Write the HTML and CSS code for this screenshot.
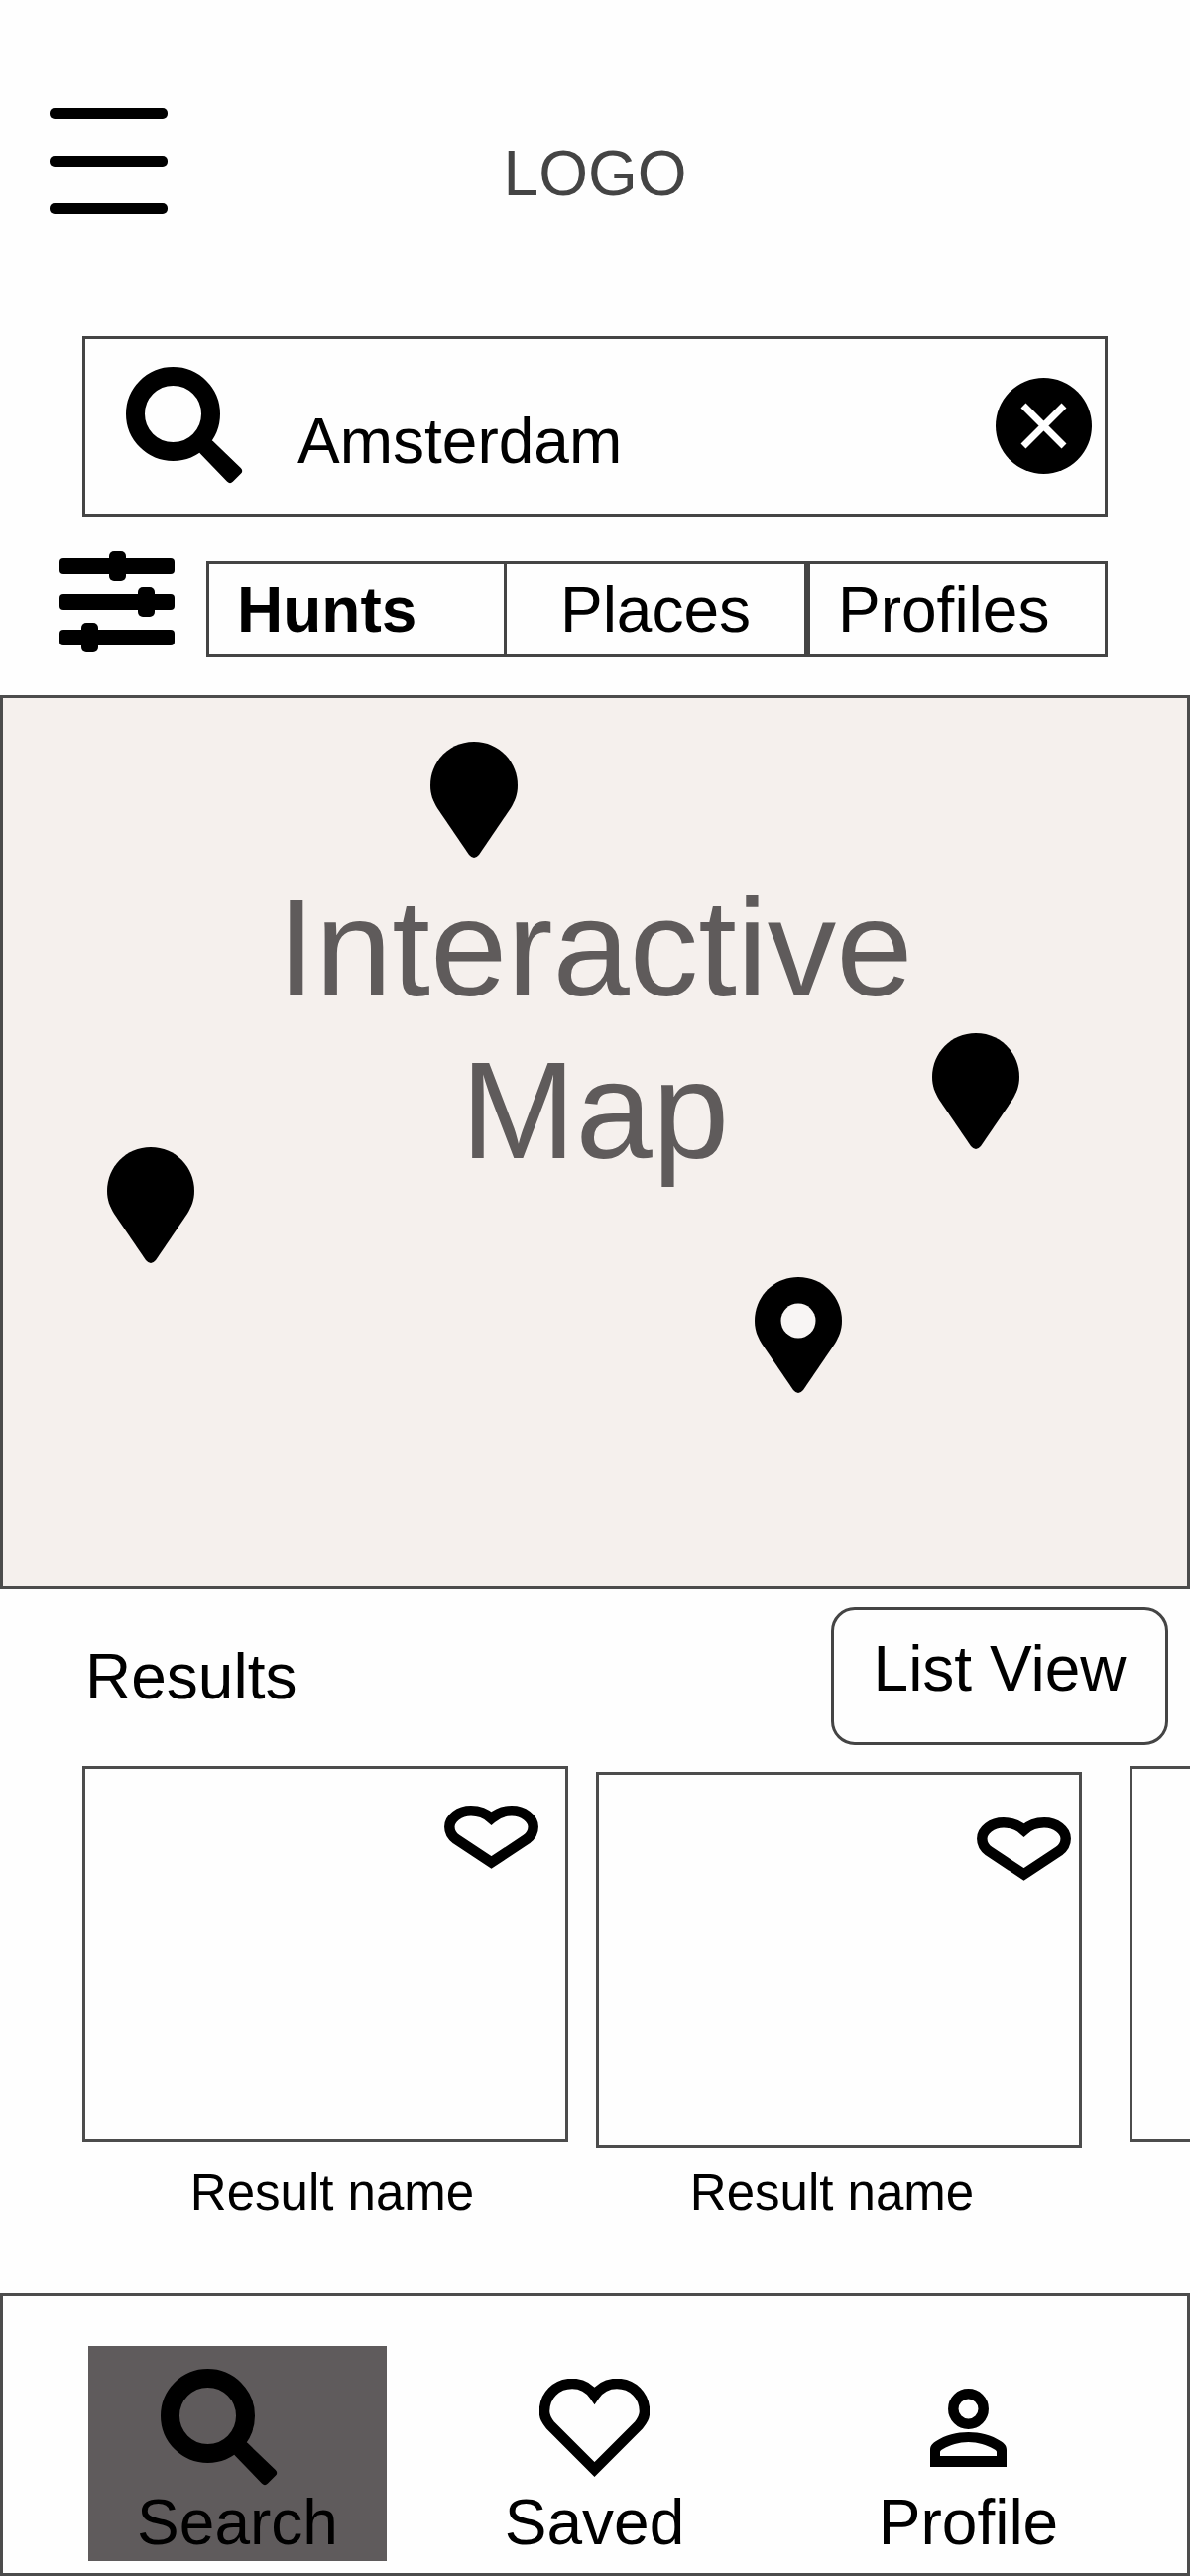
FILE: index.html
```html
<!DOCTYPE html>
<html lang="en">
<head>
<meta charset="utf-8">
<meta name="viewport" content="width=device-width, initial-scale=1">
<title>Search results</title>
<link rel="stylesheet" href="styles.css">
</head>
<body>
<svg class="sprite" aria-hidden="true">
  <symbol id="icon-search" viewBox="0 0 118 118">
    <circle cx="47.5" cy="47.5" r="38" fill="none" stroke="#000" stroke-width="19"/>
    <path d="M85 78L113 105L105 113L78 85Z" stroke="#000" stroke-width="8" stroke-linejoin="round"/>
  </symbol>
  <symbol id="icon-heart-wide" viewBox="0 0 95 64">
    <path d="M47.500 13C42 8 35 5.300 27 5.300C15 5.300 5.300 13 5.300 21.500C5.300 26 8 31 12 34L47.500 57.500L83 34C87 31 89.700 26 89.700 21.500C89.700 13 80 5.300 68 5.300C60 5.300 53 8 47.500 13Z" fill="none" stroke="#000" stroke-width="10.500"/>
  </symbol>
  <symbol id="icon-pin" viewBox="0 0 88 117">
    <path d="M44 0C19 0 0 20 0 44C0 54 3 60 7 67L39 114Q44 120 49 114L81 67C85 60 88 54 88 44C88 20 69 0 44 0Z"/>
  </symbol>
</svg>

<div class="page">
  <header class="header">
    <button class="menu" type="button" aria-label="Menu"><span></span><span></span><span></span></button>
    <div class="logo">LOGO</div>
  </header>

  <form class="search" role="search">
    <svg class="icon-search" aria-hidden="true"><use href="#icon-search"/></svg>
    <input class="search-input" type="text" value="Amsterdam" aria-label="Search">
    <button class="clear" type="button" aria-label="Clear search">
      <svg viewBox="0 0 97 97" width="97" height="97"><circle cx="48.5" cy="48.5" r="48.5"/><path d="M28 28L69 69M69 28L28 69" stroke="#fff" stroke-width="7"/></svg>
    </button>
  </form>

  <div class="filters">
    <button class="filter-button" type="button" aria-label="Filters">
      <svg viewBox="0 0 116 102" width="116" height="102">
        <rect y="7" width="116" height="16" rx="4"/><rect x="50" width="17" height="30" rx="5"/>
        <rect y="43" width="116" height="16" rx="4"/><rect x="79" y="36" width="17" height="30" rx="5"/>
        <rect y="79" width="116" height="16" rx="4"/><rect x="22" y="72" width="17" height="30" rx="5"/>
      </svg>
    </button>
    <div class="tabs">
      <button class="tab tab-active" type="button">Hunts</button>
      <button class="tab" type="button">Places</button>
      <button class="tab" type="button">Profiles</button>
    </div>
  </div>

  <section class="map" aria-label="Map">
    <h1 class="map-title">Interactive<br>Map</h1>
    <svg class="pin pin-north"><use href="#icon-pin"/></svg>
    <svg class="pin pin-east"><use href="#icon-pin"/></svg>
    <svg class="pin pin-west"><use href="#icon-pin"/></svg>
    <svg class="pin pin-south" viewBox="0 0 88 117"><use href="#icon-pin" width="88" height="117"/><circle cx="44" cy="44" r="17.5" fill="#f8f5f4"/></svg>
  </section>

  <section class="results">
    <div class="results-head">
      <h2 class="results-title">Results</h2>
      <button class="list-view" type="button">List View</button>
    </div>
    <div class="cards">
      <article class="card">
        <div class="card-picture"><button class="favorite" type="button" aria-label="Save result"><svg width="95" height="64"><use href="#icon-heart-wide"/></svg></button></div>
        <h3 class="card-name">Result name</h3>
      </article>
      <article class="card">
        <div class="card-picture"><button class="favorite" type="button" aria-label="Save result"><svg width="95" height="64"><use href="#icon-heart-wide"/></svg></button></div>
        <h3 class="card-name">Result name</h3>
      </article>
      <article class="card">
        <div class="card-picture"></div>
      </article>
    </div>
  </section>

  <nav class="nav">
    <a class="nav-item nav-current" href="#search">
      <span class="nav-icon"><svg class="icon-search"><use href="#icon-search"/></svg></span>
      Search
    </a>
    <a class="nav-item" href="#saved">
      <span class="nav-icon"><svg viewBox="0 0 111 99" width="111" height="99"><path d="M55.5 17C50 9 42 5 33 5C17 5 5 17 5 33C5 39 7 42 11 47L55.500 91.500L100 47C104 42 106 39 106 33C106 17 94 5 78 5C69 5 61 9 55.500 17Z" fill="none" stroke="#000" stroke-width="10.500"/></svg></span>
      Saved
    </a>
    <a class="nav-item" href="#profile">
      <span class="nav-icon"><svg viewBox="0 0 77 79" width="77" height="79"><circle cx="38.5" cy="20.500" r="15.200" fill="none" stroke="#000" stroke-width="10.500"/><path fill-rule="evenodd" d="M0 79V62C0 57 3 55 6 53C15 47 27 44 38.500 44C50 44 62 47 71 53C74 55 77 57 77 62V79ZM10 68H67V64C67 63 66 62 64 61C57 57 48 54 38.500 54C29 54 20 57 13 61C11 62 10 63 10 64Z"/></svg></span>
      Profile
    </a>
  </nav>
</div>
</body>
</html>
```
FILE: styles.css
```css
* {
  box-sizing: border-box;
}

body {
  margin: 0;
  background: #fefefe;
  color: #000;
  font-family: "Liberation Sans", Arial, sans-serif;
  font-size: 64px;
  line-height: 64px;
}

button {
  display: block;
  margin: 0;
  padding: 0;
  border: 0;
  background: none;
  color: inherit;
  font: inherit;
}

h1,
h2,
h3 {
  margin: 0;
  font-weight: 400;
}

svg {
  display: block;
  flex: none;
}

.sprite {
  position: absolute;
  width: 0;
  height: 0;
}

.icon-search {
  width: 118px;
  height: 118px;
}

.page {
  display: flex;
  flex-direction: column;
  min-height: 100vh;
  overflow: hidden;
}

/* Header */

.header {
  display: grid;
  grid-template-columns: 1fr auto 1fr;
  padding: 109px 50px 0;
}

.menu {
  display: flex;
  flex-direction: column;
  gap: 37px;
  width: 119px;
}

.menu span {
  height: 11px;
  border-radius: 5px;
  background: #000;
}

.logo {
  padding-top: 34px;
  color: #444;
}

/* Search box */

.search {
  display: flex;
  align-items: center;
  height: 182px;
  margin: 123px 83px 0;
  padding: 0 13px 2px 41px;
  border: 3px solid #444;
}

.search-input {
  flex: 1;
  min-width: 0;
  padding: 32px 0 0 55px;
  border: 0;
  outline: 0;
  background: none;
  color: inherit;
  font: inherit;
}

/* Filters */

.filters {
  display: flex;
  align-items: flex-start;
  gap: 32px;
  height: 107px;
  margin-top: 35px;
  padding: 0 83px 0 60px;
}

.tabs {
  display: grid;
  flex: 1;
  grid-template-columns: repeat(3, 1fr);
  align-self: flex-end;
  height: 97px;
}

.tab {
  border: 3px solid #444;
  text-align: center;
}

.tab:first-child,
.tab:last-child {
  padding-left: 28px;
  text-align: left;
}

.tab:nth-child(2) {
  border-left: 0;
}

.tab-active {
  font-weight: 700;
}

/* Map */

.map {
  position: relative;
  min-height: 902px;
  margin-top: 38px;
  padding-top: 170px;
  border: 3px solid #4c4c4c;
  background: #f5f0ed;
}

.map-title {
  color: #5f5b5b;
  font-size: 139px;
  line-height: 164px;
  text-align: center;
}

.pin {
  position: absolute;
  width: 88px;
  height: 117px;
}

.pin-north {
  top: 44px;
  left: calc(50% - 166px);
}

.pin-east {
  top: 338px;
  left: calc(50% + 340px);
}

.pin-west {
  top: 453px;
  left: calc(50% - 492px);
}

.pin-south {
  top: 584px;
  left: calc(50% + 161px);
}

/* Results */

.results {
  padding: 18px 0 20px;
}

.results-head {
  display: flex;
  align-items: center;
  justify-content: space-between;
  padding: 0 22px 0 86px;
}

.results-title {
  font-size: 64px;
}

.list-view {
  width: 340px;
  height: 139px;
  padding-bottom: 15px;
  border: 3px solid #444;
  border-radius: 24px;
}

.cards {
  display: flex;
  gap: 28px;
  margin-top: 21px;
  padding-left: 83px;
}

.card {
  display: flex;
  flex: none;
  flex-direction: column;
  gap: 22px;
  width: 490px;
}

.card:nth-child(even) {
  gap: 16px;
  margin-right: 20px;
  padding-top: 6px;
}

.card-picture {
  display: flex;
  align-items: flex-start;
  justify-content: flex-end;
  height: 379px;
  padding: 37px 27px;
  border: 3px solid #4c4c4c;
}

.card:nth-child(even) .card-picture {
  padding: 43px 8px;
}

.card-name {
  padding-left: 14px;
  font-size: 51px;
  line-height: 60px;
  text-align: center;
}

.card:nth-child(even) .card-name {
  padding: 0 14px 0 0;
}

/* Bottom navigation */

.nav {
  display: grid;
  grid-template-columns: 301fr 301fr 335fr;
  gap: 59px;
  margin-top: auto;
  padding: 50px 53px 12px 86px;
  border: 3px solid #4c4c4c;
}

.nav-item {
  display: flex;
  flex-direction: column;
  align-items: center;
  gap: 5px;
  padding: 23px 0 7px;
  color: inherit;
  text-decoration: none;
}

.nav-icon {
  display: flex;
  align-items: center;
  height: 118px;
}

.nav-current {
  background: #5f5b5c;
}

.nav-current .nav-icon {
  padding-right: 38px;
}
```
